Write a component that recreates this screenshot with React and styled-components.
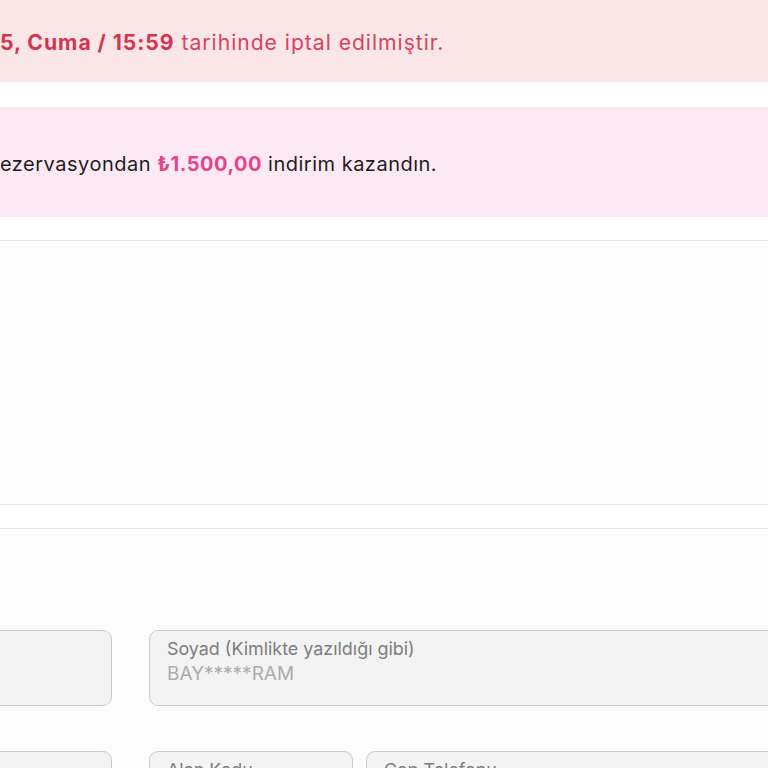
import React from "react";
import styled, { createGlobalStyle } from "styled-components";

const Global = createGlobalStyle`
  html, body { margin: 0; padding: 0; background: #ffffff; overflow: hidden; }
  body { font-family: Inter, "Noto Sans", "Liberation Sans", sans-serif; }
  #root { width: 768px; height: 768px; overflow: hidden; }
`;

const Page = styled.div`
  width: 768px;
  display: flex;
  flex-direction: column;
`;

const Alert = styled.div`
  height: ${(p) => p.$h}px;
  margin-bottom: ${(p) => p.$mb}px;
  background: ${(p) => p.$bg};
  display: flex;
  align-items: center;
  font-family: Inter, "Noto Sans", sans-serif;
  font-size: ${(p) => p.$fs}px;
  letter-spacing: ${(p) => p.$ls}px;
  color: ${(p) => p.$color};
  white-space: nowrap;
`;

const AlertText = styled.p`
  margin: 0;
  padding-top: ${(p) => p.$pt || 0}px;
`;

const Strong = styled.strong`
  font-weight: 700;
  color: ${(p) => p.$color || "inherit"};
`;

const Panel = styled.section`
  height: ${(p) => p.$h}px;
  margin-bottom: ${(p) => p.$mb || 0}px;
  background: #fcfcfc;
  border-top: 1.5px solid #e6e6e6;
  border-bottom: ${(p) => (p.$open ? "none" : "1.5px solid #e6e6e6")};
  box-sizing: border-box;
`;

const FormPanel = styled(Panel)`
  height: auto;
  padding-top: 101px;
  display: flex;
  flex-direction: column;
  gap: 45px;
`;

const Row = styled.div`
  display: flex;
  gap: 37px;
  margin-left: -188px;
  width: calc(100% + 400px);
`;

const Group = styled.div`
  flex: 1;
  display: flex;
  gap: 13px;
`;

const Field = styled.div`
  box-sizing: border-box;
  height: 76px;
  width: ${(p) => (p.$w ? `${p.$w}px` : "auto")};
  flex: ${(p) => (p.$w ? "none" : "1")};
  border: 1.5px solid #cbcbcb;
  border-radius: 9px;
  background: #f3f3f3;
  padding: 6px 17px;
  display: flex;
  flex-direction: column;
`;

const Label = styled.span`
  font-size: 17.9px;
  line-height: 23px;
  color: #7d7d7d;
  white-space: nowrap;
`;

const Value = styled.span`
  font-size: 19px;
  line-height: 27px;
  color: #acacac;
  white-space: nowrap;
`;

export default function App() {
  return (
    <>
      <Global />
      <Page>
        <Alert $h={82} $mb={25} $bg="#fae6e7" $fs={21.2} $ls={0.95} $color="#d5445d">
          <AlertText $pt={1}>
            <Strong $color="#d4344f">5, Cuma / 15:59</Strong> tarihinde iptal edilmiştir.
          </AlertText>
        </Alert>
        <Alert $h={110} $mb={23} $bg="#fce9f3" $fs={20} $ls={0.5} $color="#1d1d1f">
          <AlertText $pt={4}>
            ezervasyondan <Strong $color="#e4448b">₺1.500,00</Strong> indirim kazandın.
          </AlertText>
        </Alert>
        <Panel $h={265} $mb={23} />
        <FormPanel $open>
          <Row>
            <Field $w={300} />
            <Field>
              <Label>Soyad (Kimlikte yazıldığı gibi)</Label>
              <Value>BAY*****RAM</Value>
            </Field>
          </Row>
          <Row>
            <Field $w={300} />
            <Group>
              <Field $w={204}>
                <Label>Alan Kodu</Label>
                <Value>+90</Value>
              </Field>
              <Field>
                <Label>Cep Telefonu</Label>
                <Value>5** *** ** **</Value>
              </Field>
            </Group>
          </Row>
        </FormPanel>
      </Page>
    </>
  );
}
